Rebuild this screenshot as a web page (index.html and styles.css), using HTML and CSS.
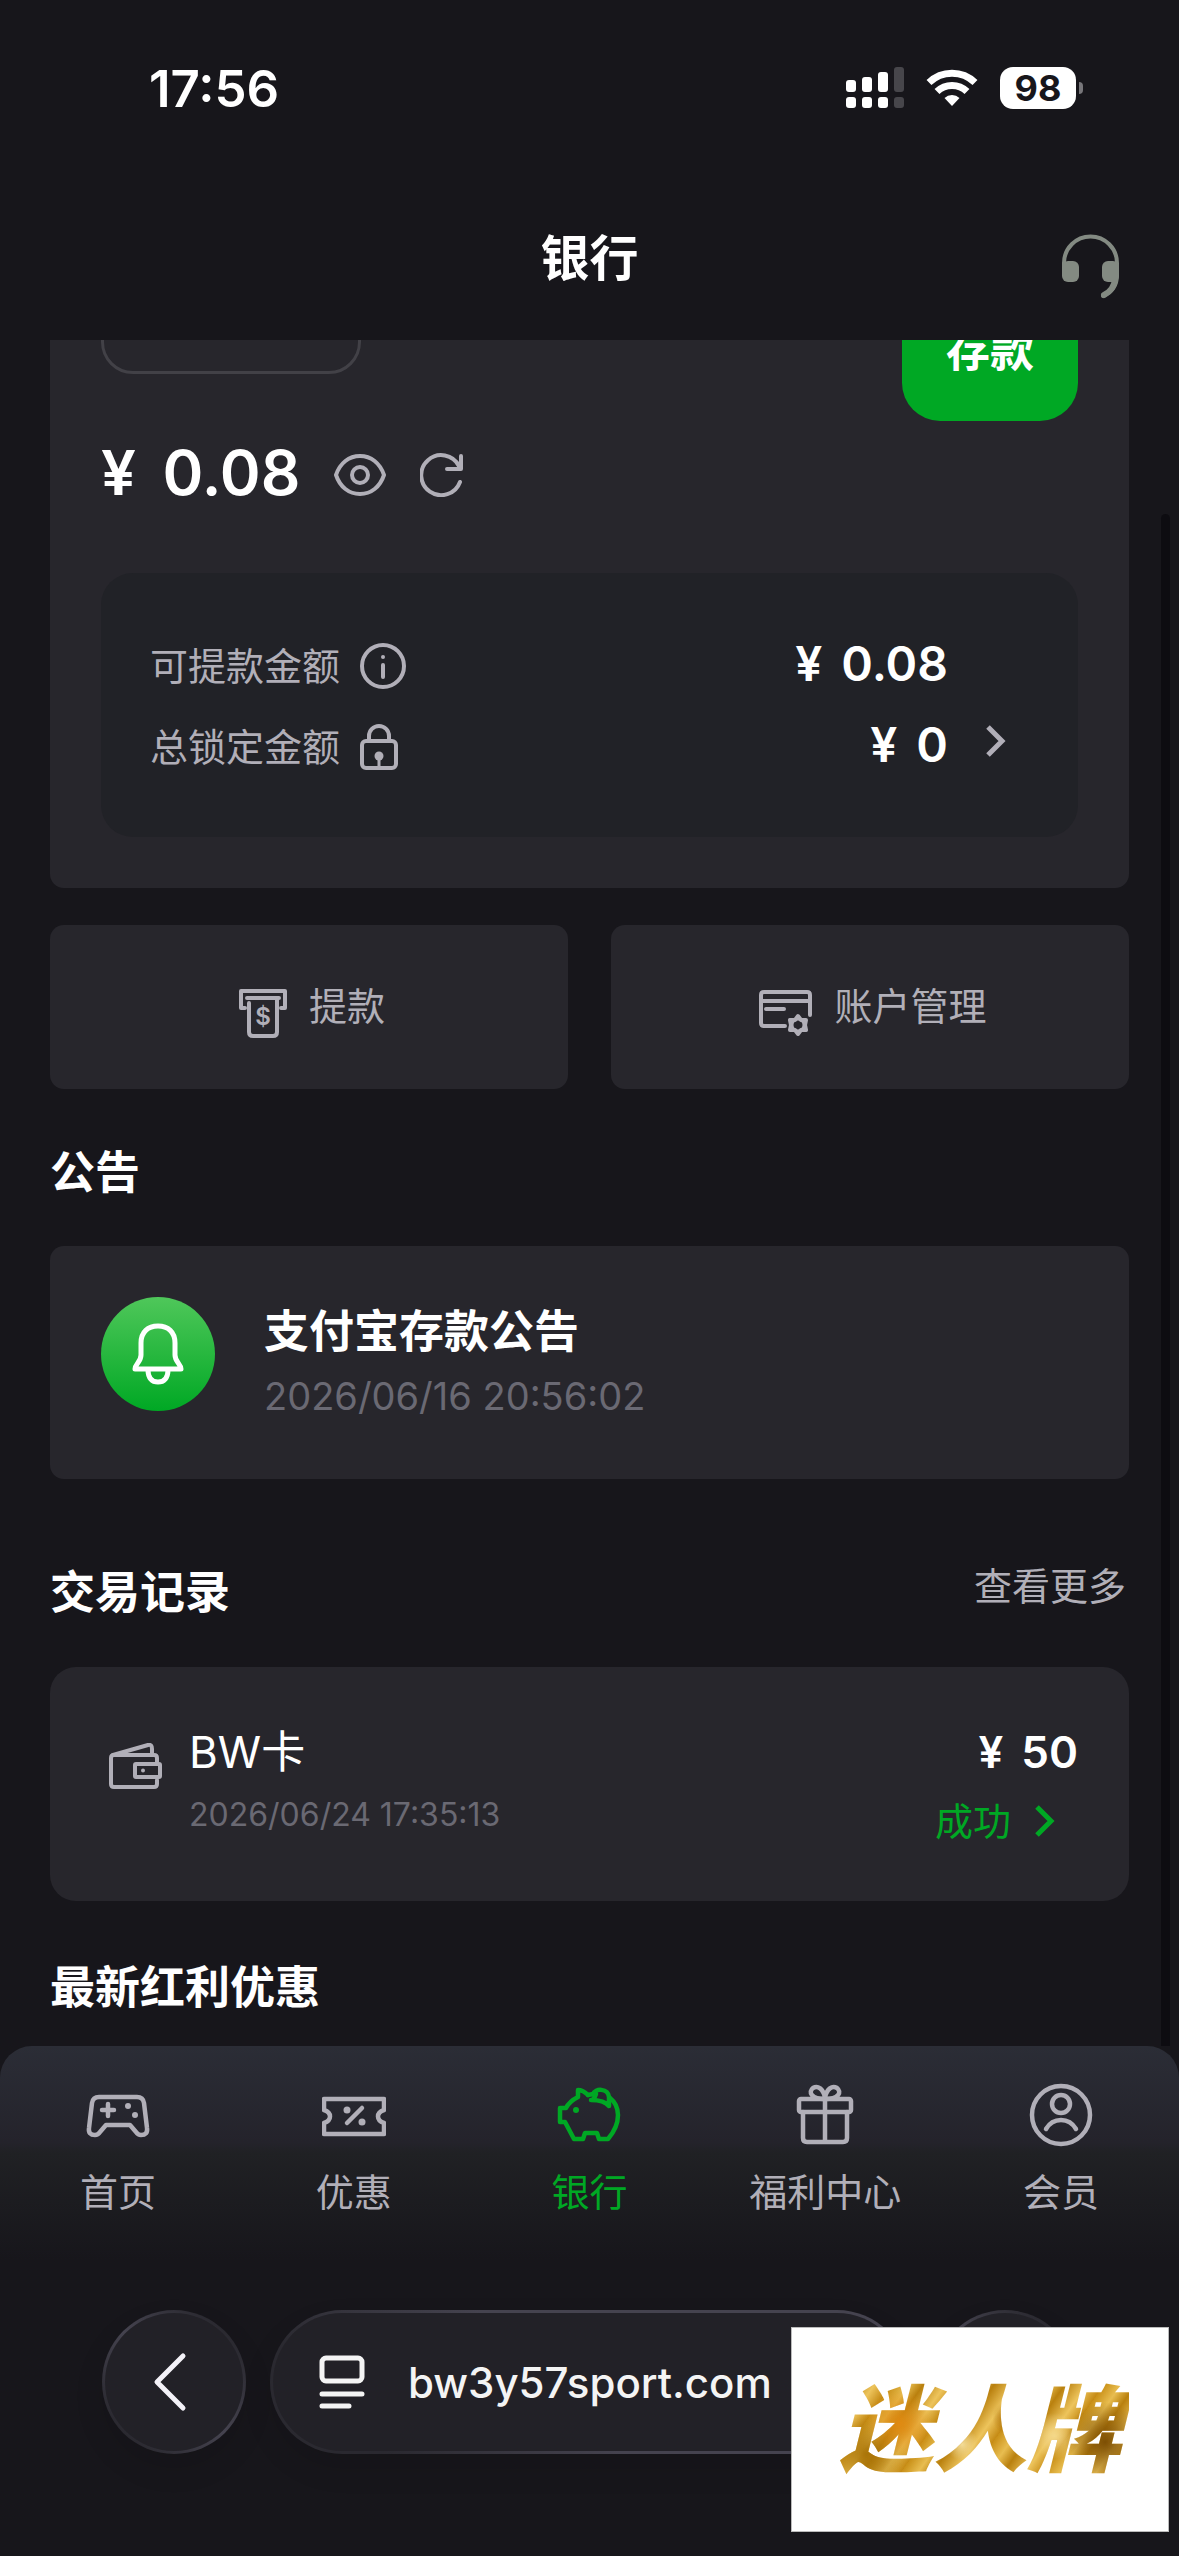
FILE: index.html
```
<!DOCTYPE html>
<html lang="zh-CN">
<head>
  <meta charset="UTF-8">
  <meta name="viewport" content="width=device-width, initial-scale=1.0">
  <title>银行</title>
  <link rel="stylesheet" href="styles.css">
</head>
<body>
  <div class="status-bar">
    <span class="time">17:56</span>
    <div class="status-icons">
      <svg width="58" height="42" viewBox="0 0 58 42" fill="#fff">
        <rect x="0" y="13" width="10" height="12" rx="3"/>
        <rect x="16" y="10" width="10" height="15" rx="3"/>
        <rect x="32" y="5" width="10" height="20" rx="3"/>
        <rect x="48" y="0" width="10" height="25" rx="3" fill="#47464b"/>
        <rect x="0" y="30" width="10" height="11" rx="3"/>
        <rect x="16" y="30" width="10" height="11" rx="3"/>
        <rect x="32" y="30" width="10" height="11" rx="3"/>
        <rect x="48" y="30" width="10" height="11" rx="3" fill="#47464b"/>
      </svg>
      <svg width="52" height="38" viewBox="0 0 52 38" fill="none" stroke="#fff" stroke-width="7">
        <path d="M3 13.500a33 33 0 0 1 46 0"/>
        <path d="M11 22.500a21.500 21.500 0 0 1 30 0"/>
        <path d="M26 37l-7.500-8a11 11 0 0 1 15 0z" fill="#fff" stroke="none"/>
      </svg>
      <span class="battery">98</span>
    </div>
  </div>

  <header class="page-header">
    <h1>银行</h1>
    <button class="icon-btn service" aria-label="客服">
      <svg width="60" height="66" viewBox="0 0 60 66" fill="none" stroke="#838a82" stroke-width="4" stroke-linecap="round">
        <path d="M4 38V30a26.500 26.500 0 0 1 53 0v12q0 15-14 21"/>
        <path d="M55 46q-1 11-11 16" stroke-width="6"/>
        <rect x="2" y="28" width="17" height="21" rx="6" fill="#838a82" stroke="none"/>
        <rect x="42" y="28" width="17" height="21" rx="6" fill="#838a82" stroke="none"/>
      </svg>
    </button>
  </header>

  <main class="content">
    <div class="scroll">
      <section class="card balance">
        <div class="balance-top">
          <button class="wallet-select" aria-label="钱包"></button>
          <button class="deposit">存款</button>
        </div>
        <div class="amount">
          <span><span class="yen">¥</span> 0.08</span>
          <button class="icon-btn" aria-label="显示余额">
            <svg class="line-icon" width="52" height="42" viewBox="0 0 52 42">
              <path d="M2 21C6 9 15 2 26 2s20 7 24 19c-4 12-13 19-24 19S6 33 2 21z"/>
              <circle cx="26" cy="21" r="8"/>
            </svg>
          </button>
          <button class="icon-btn" aria-label="刷新">
            <svg class="line-icon" width="44" height="44" viewBox="0 0 44 44">
              <path d="M40 29A20 20 0 1 1 39 13"/>
              <path d="M41 3v13H27"/>
            </svg>
          </button>
        </div>
        <div class="details">
          <div class="detail-row">
            <span class="label">可提款金额
              <svg class="line-icon" width="46" height="46" viewBox="0 0 46 46">
                <circle cx="23" cy="23" r="21"/>
                <path d="M23 22v12"/>
                <circle cx="23" cy="14" r="2" fill="#b1afb8" stroke="none"/>
              </svg>
            </span>
            <span class="value"><span class="yen">¥</span> 0.08</span>
          </div>
          <div class="detail-row">
            <span class="label">总锁定金额
              <svg class="line-icon" width="38" height="46" viewBox="0 0 38 46">
                <rect x="2" y="17" width="34" height="27" rx="4"/>
                <path d="M9 17v-5a10 10 0 0 1 20 0v5"/>
                <circle cx="19" cy="32" r="4.500" fill="#b1afb8" stroke="none"/>
                <path d="M19 32v11" stroke-width="3"/>
              </svg>
            </span>
            <span class="value"><span class="yen">¥</span> 0</span>
            <svg class="chevron" width="20" height="32" viewBox="0 0 20 32" stroke="#b1afb8"><path d="M2 2l14 14L2 30"/></svg>
          </div>
        </div>
      </section>

      <div class="actions">
        <button class="action">
          <svg class="line-icon" width="48" height="49" viewBox="0 0 48 49">
            <path d="M6 19H2V2h44v17h-4"/>
            <path d="M8 9h32M10 14v29q0 4 4 4h20q4 0 4-4V10"/>
            <text x="24" y="36" class="dollar">$</text>
          </svg>
          <span>提款</span>
        </button>
        <button class="action">
          <svg class="line-icon" width="53" height="46" viewBox="0 0 53 46">
            <path d="M26 36H5q-3 0-3-3V5q0-3 3-3h43q3 0 3 3v20M2 11h49M7 19h18"/>
            <path d="M39 26l3 4 5 0-1 5 1 5-5 0-3 4-3-4-5 0 1-5-1-5 5 0z"/>
            <circle cx="39" cy="35" r="6" stroke-width="3"/>
          </svg>
          <span>账户管理</span>
        </button>
      </div>

      <section class="notice">
        <h2>公告</h2>
        <a class="card notice-card" href="#notice">
          <span class="bell">
            <svg width="114" height="114" viewBox="0 0 114 114" fill="none" stroke="#fff" stroke-width="5" stroke-linecap="round" stroke-linejoin="round">
              <path d="M40 58V46C40 35 47 29 57 29s17 6 17 17v12c0 7 6 9 6 14H34c0-5 6-7 6-14z"/>
              <path d="M47 73c0 8 4 12 10 12s10-4 10-12"/>
            </svg>
          </span>
          <span class="notice-text">
            <strong>支付宝存款公告</strong>
            <time>2026/06/16 20:56:02</time>
          </span>
        </a>
      </section>

      <section class="records">
        <div class="section-head">
          <h2>交易记录</h2>
          <a href="#more">查看更多</a>
        </div>
        <a class="card record" href="#record">
          <svg class="line-icon wallet" width="53" height="46" viewBox="0 0 53 46">
            <path d="M48 19v-4q0-3-3-3H5q-3 0-3 3v26q0 3 3 3h40q3 0 3-3v-4"/>
            <path d="M4 12L39 2q4-1 4 4v6"/>
            <rect x="26" y="21" width="25" height="13" rx="1"/>
            <circle cx="34" cy="27.500" r="2" fill="#b1afb8" stroke="none"/>
          </svg>
          <span class="record-main">
            <span class="record-name">BW卡</span>
            <time>2026/06/24 17:35:13</time>
          </span>
          <span class="record-side">
            <span class="record-amount"><span class="yen">¥</span> 50</span>
            <span class="record-status">成功
              <svg class="chevron" width="20" height="32" viewBox="0 0 20 32" stroke="#00a824"><path d="M2 2l14 14L2 30"/></svg>
            </span>
          </span>
        </a>
      </section>

      <section class="bonus">
        <h2>最新红利优惠</h2>
      </section>
    </div>
    <div class="scrollbar"></div>
  </main>

  <nav class="tabbar">
    <a href="#home">
      <svg viewBox="0 0 64 64">
        <path d="M13 14h38q6 0 7 6l3 25q1 7-6 7-3 0-5-3l-6-7H20l-6 7q-2 3-5 3-7 0-6-7l3-25q1-6 7-6z"/>
        <path d="M16 27h12M22 21v12"/>
        <circle class="dot" cx="42" cy="23" r="3"/>
        <circle class="dot" cx="49" cy="32" r="3"/>
      </svg>
      首页
    </a>
    <a href="#promo">
      <svg viewBox="0 0 64 64">
        <path d="M2 16h60v11q-6 2-6 6.500t6 6.500v11H2V40q6-2 6-6.500T2 27z"/>
        <path d="M25 40l15-15"/>
        <circle class="dot" cx="25" cy="27" r="3.500"/>
        <circle class="dot" cx="40" cy="39" r="3.500"/>
      </svg>
      优惠
    </a>
    <a href="#bank" class="active">
      <svg viewBox="0 0 64 64">
        <path d="M31 12c-3-3-6-5-10-5v7c-6 3-10 7-12 11H3v14h5l9 17h9l2-6h12l2 6h9c6-7 10-14 10-24 0-7-3-13-8-17"/>
        <path d="M31 12l5-1c2-6 15-6 16 3v9c-4-5-10-6-18-6 3 0 4-3 5-6"/>
        <circle class="dot" cx="19" cy="27" r="3"/>
      </svg>
      银行
    </a>
    <a href="#welfare">
      <svg viewBox="0 0 64 64">
        <rect x="6" y="16" width="52" height="13" rx="2"/>
        <path d="M10 29v26q0 4 4 4h36q4 0 4-4V29M32 16v43"/>
        <path d="M32 16c-14 0-17-7-12-11 5-3 10 1 12 9 2-8 7-12 12-9 5 4 2 11-12 11z"/>
      </svg>
      福利中心
    </a>
    <a href="#member">
      <svg viewBox="0 0 64 64">
        <circle cx="32" cy="32" r="29"/>
        <circle cx="32" cy="21" r="9"/>
        <path d="M17 46c7-12 23-12 30 0"/>
      </svg>
      会员
    </a>
  </nav>

  <div class="browser-bar">
    <button class="glass round" aria-label="后退">
      <svg width="36" height="60" viewBox="0 0 36 60" fill="none" stroke="#f4f2f8" stroke-width="5" stroke-linecap="round" stroke-linejoin="round"><path d="M31 4L5 30l26 26"/></svg>
    </button>
    <div class="glass address">
      <svg width="46" height="54" viewBox="0 0 46 54" fill="none" stroke="#f4f4f4" stroke-width="5" stroke-linecap="round">
        <rect x="3" y="3" width="40" height="23" rx="4"/>
        <path d="M3 39h40M3 51h27"/>
      </svg>
      <span>bw3y57sport.com</span>
    </div>
    <button class="glass round" aria-label="更多"></button>
    <div class="brand"><span>迷人牌</span></div>
  </div>
</body>
</html>
```
FILE: styles.css
```
* {
  box-sizing: border-box;
}

body {
  margin: 0;
  height: 100vh;
  display: flex;
  flex-direction: column;
  overflow: hidden;
  background: #17161b;
  color: #fff;
  font-family: Inter, "Noto Sans CJK SC", sans-serif;
  font-size: 38px;
}

button {
  padding: 0;
  border: none;
  background: none;
  color: inherit;
  font: inherit;
  cursor: pointer;
}

a {
  color: inherit;
  text-decoration: none;
}

svg {
  display: block;
  flex: none;
}

h1, h2 {
  margin: 0;
}

h2 {
  font-size: 45px;
  font-weight: 600;
  line-height: 56px;
}

.line-icon {
  fill: none;
  stroke: #b1afb8;
  stroke-width: 4;
  stroke-linecap: round;
  stroke-linejoin: round;
}

.chevron {
  fill: none;
  stroke-width: 5;
}

.icon-btn {
  display: flex;
}

.yen {
  margin-right: 7px;
}

/* status bar */
.status-bar {
  display: flex;
  justify-content: space-between;
  align-items: center;
  height: 176px;
  padding: 0 96px 0 149px;
}

.time {
  font-size: 51px;
  font-weight: 600;
}

.status-icons {
  display: flex;
  align-items: center;
  gap: 22px;
}

.battery {
  position: relative;
  width: 76px;
  height: 42px;
  margin-right: 7px;
  border-radius: 13px;
  background: #fff;
  color: #17161b;
  font-size: 36px;
  font-weight: 700;
  line-height: 42px;
  text-align: center;
}

.battery::after {
  content: "";
  position: absolute;
  top: 15px;
  right: -7px;
  width: 4px;
  height: 12px;
  border-radius: 0 4px 4px 0;
  background: #77767a;
}

/* page header */
.page-header {
  display: grid;
  grid-template-columns: 1fr auto 1fr;
  align-items: center;
  height: 164px;
  padding: 2px 59px 0;
}

.page-header h1 {
  grid-column: 2;
  font-size: 49px;
  font-weight: 600;
  line-height: 60px;
}

.service {
  justify-self: end;
  padding-top: 14px;
}

/* scrolled content */
.content {
  position: relative;
  flex: 1;
  min-height: 0;
  padding: 0 50px;
  overflow: hidden;
}

.scroll {
  margin-top: -100px;
}

.scrollbar {
  position: absolute;
  top: 174px;
  right: 9px;
  bottom: 0;
  width: 9px;
  border-radius: 5px 5px 0 0;
  background: #0d0c11;
}

.card {
  background: #27262c;
  border-radius: 14px;
}

.balance {
  padding: 35px 51px 51px;
}

.balance-top {
  display: flex;
  justify-content: space-between;
  align-items: flex-start;
}

.wallet-select {
  width: 260px;
  height: 99px;
  border: 3px solid #424147;
  border-radius: 32px;
}

.deposit {
  width: 176px;
  height: 146px;
  border-radius: 38px;
  background: #00a824;
  font-size: 44px;
  font-weight: 600;
}

.amount {
  display: flex;
  align-items: center;
  gap: 34px;
  margin-top: 16px;
  font-size: 62px;
  font-weight: 600;
  line-height: 72px;
}

.amount .yen {
  margin-right: 11px;
}

.amount .icon-btn {
  padding-top: 4px;
}

.details {
  margin-top: 64px;
  padding: 50px 72px 52px 49px;
  border-radius: 32px;
  background: #212227;
}

.detail-row {
  display: grid;
  grid-template-columns: 1fr auto 20px;
  column-gap: 38px;
  align-items: center;
  height: 81px;
}

.detail-row .chevron {
  margin-bottom: 8px;
}

.label {
  display: flex;
  align-items: center;
  gap: 20px;
  color: #b1afb8;
}

.label .line-icon {
  margin-top: 5px;
}

.value {
  font-size: 48px;
  font-weight: 600;
}

.actions {
  display: grid;
  grid-template-columns: 1fr 1fr;
  gap: 43px;
  margin-top: 37px;
}

.action {
  display: flex;
  justify-content: center;
  align-items: center;
  gap: 22px;
  height: 164px;
  padding-left: 6px;
  border-radius: 14px;
  background: #27262c;
  color: #b1afb8;
}

.action span {
  padding-bottom: 8px;
}

.action .line-icon {
  margin-top: 12px;
}

.dollar {
  fill: #b1afb8;
  stroke: none;
  font-size: 24px;
  font-weight: 600;
  text-anchor: middle;
}

/* notice */
.notice {
  margin-top: 56px;
}

.notice-card {
  display: flex;
  gap: 49px;
  margin-top: 45px;
  padding: 51px;
}

.bell {
  width: 114px;
  height: 114px;
  border-radius: 50%;
  background: linear-gradient(#4fc75a, #00a824);
}

.notice-text {
  display: flex;
  flex-direction: column;
  padding-top: 3px;
  line-height: 64px;
}

.notice-text strong {
  font-size: 45px;
  font-weight: 600;
}

time {
  color: #6a6973;
  font-weight: 400;
}

/* transactions */
.records {
  margin-top: 86px;
}

.section-head {
  display: flex;
  justify-content: space-between;
}

.section-head a {
  margin-right: 3px;
  color: #b1afb8;
  line-height: 42px;
}

.record {
  display: flex;
  margin-top: 46px;
  padding: 51px 51px 45px 59px;
  border-radius: 26px;
}

.wallet {
  margin-top: 25px;
}

.record-main,
.record-side {
  display: flex;
  flex-direction: column;
  line-height: 68px;
}

.record-main {
  flex: 1;
  margin-left: 27px;
}

.record-name {
  font-size: 44px;
}

.record-main time {
  font-size: 32px;
  line-height: 58px;
}

.record-side {
  align-items: flex-end;
}

.record-amount {
  font-size: 44px;
  font-weight: 600;
}

.record-status {
  display: flex;
  align-items: center;
  gap: 24px;
  margin-right: 23px;
  color: #00a824;
  line-height: 70px;
}

.bonus {
  margin-top: 59px;
}

/* bottom tabs */
.tabbar {
  display: grid;
  grid-template-columns: repeat(5, 1fr);
  height: 214px;
  padding-top: 37px;
  border-radius: 32px 32px 0 0;
  background: linear-gradient(#2b2d36, #24232b 45%, #202124 50%, #17161b);
}

.tabbar a {
  display: flex;
  flex-direction: column;
  align-items: center;
  gap: 20px;
  color: #b1afb8;
  line-height: 50px;
}

.tabbar svg {
  width: 64px;
  height: 64px;
  fill: none;
  stroke: currentColor;
  stroke-width: 4.5;
  stroke-linecap: round;
  stroke-linejoin: round;
}

.tabbar .dot {
  fill: currentColor;
  stroke: none;
}

.tabbar .active {
  color: #00a824;
}

/* browser controls */
.browser-bar {
  position: relative;
  display: flex;
  gap: 24px;
  height: 296px;
  padding: 50px 102px 102px;
}

.glass {
  display: flex;
  align-items: center;
  height: 144px;
  border: 3px solid transparent;
  border-radius: 72px;
  background:
    linear-gradient(#222127, #222127) padding-box,
    linear-gradient(45deg, #2a2930 15%, #45434f 45%) border-box;
  box-shadow: 0 14px 30px rgba(0, 0, 0, 0.1);
}

.round {
  justify-content: center;
  flex: none;
  width: 144px;
  background:
    linear-gradient(#222127, #222127) padding-box,
    linear-gradient(45deg, #2a2930 15%, #45434f 50%, #2a2930 85%) border-box;
}

.round svg {
  margin-right: 8px;
}

.address {
  flex: 1;
  gap: 43px;
  padding-left: 46px;
  color: #f4f4f4;
  font-size: 42px;
  font-weight: 500;
}

.brand {
  position: absolute;
  right: 10px;
  bottom: 24px;
  display: flex;
  justify-content: center;
  align-items: center;
  width: 378px;
  height: 205px;
  border: 1px solid #bbb;
  background: #fff;
}

.brand span {
  padding: 0 8px;
  background:
    radial-gradient(circle at 60% 40%, #a86c08, transparent 9%),
    radial-gradient(circle at 23% 45%, #e08a12, transparent 14%),
    radial-gradient(circle at 92% 60%, #7d4f04, transparent 14%),
    radial-gradient(circle at 75% 55%, #f4d88a, transparent 10%),
    radial-gradient(circle at 44% 62%, #f3dc98, transparent 9%),
    radial-gradient(circle at 12% 70%, #a97408, transparent 14%),
    repeating-linear-gradient(125deg, #c99018 0, #e8bd50 14px, #b9800e 26px, #edc45c 44px, #c58a14 58px);
  background-clip: text;
  -webkit-background-clip: text;
  color: transparent;
  font-size: 94px;
  font-style: italic;
  font-weight: 900;
  line-height: 120px;
}
```
